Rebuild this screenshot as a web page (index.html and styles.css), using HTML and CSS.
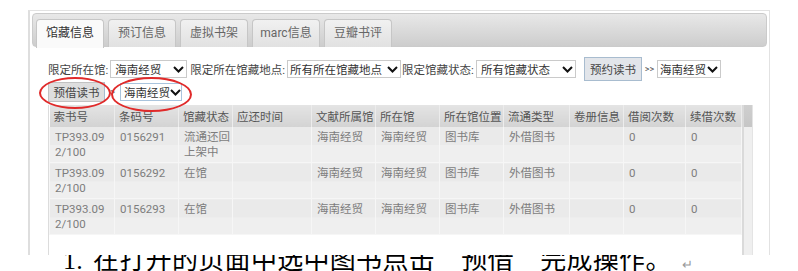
FILE: index.html
```html
<!DOCTYPE html>
<html lang="zh-CN">

<head>
    <meta charset="UTF-8">
    <title>馆藏信息</title>

    <link rel="stylesheet" href="styles.css">
</head>

<body>

    <div class="shot">
        <div class="frame">

            <!-- tabs -->
            <div class="tabbar">
                <div class="tab active">馆藏信息</div>
                <div class="tab">预订信息</div>
                <div class="tab">虚拟书架</div>
                <div class="tab">marc信息</div>
                <div class="tab">豆瓣书评</div>
            </div>

            <div class="panel">
                <div class="filter-row">
                    <span class="label">限定所在馆:</span>
                    <span class="sel sel-lib">海南经贸<svg class="chev" viewBox="0 0 11 7"><path d="M1 1l4.5 4.5L10 1"/></svg></span>
                    <span class="label label-next">限定所在馆藏地点:</span>
                    <span class="sel sel-loc">所有所在馆藏地点<svg class="chev" viewBox="0 0 11 7"><path d="M1 1l4.5 4.5L10 1"/></svg></span>
                    <span class="label">限定馆藏状态:</span>
                    <span class="sel sel-state">所有馆藏状态<svg class="chev" viewBox="0 0 11 7"><path d="M1 1l4.5 4.5L10 1"/></svg></span>
                    <span class="btn btn-reserve">预约读书</span>
                    <span class="arrow">&gt;&gt;</span>
                    <span class="sel sel-sm">海南经贸<svg class="chev" viewBox="0 0 11 7"><path d="M1 1l4.5 4.5L10 1"/></svg></span>
                </div>

                <div class="filter-row row-borrow">
                    <span class="marked">
                        <span class="btn btn-borrow">预借读书</span>
                        <span class="ring ring-btn"></span>
                    </span>
                    <span class="arrow arrow-one">&gt;</span>
                    <span class="marked">
                        <span class="sel sel-focus">海南经贸<svg class="chev" viewBox="0 0 11 7"><path d="M1 1l4.5 4.5L10 1"/></svg></span>
                        <span class="ring ring-sel"></span>
                    </span>
                </div>

                <div class="grid">
                    <table class="holdings">
                        <colgroup>
                            <col style="width:65px">
                            <col style="width:64px">
                            <col style="width:54px">
                            <col style="width:79px">
                            <col style="width:64px">
                            <col style="width:64px">
                            <col style="width:64px">
                            <col style="width:66px">
                            <col style="width:54px">
                            <col style="width:62px">
                            <col style="width:56px">
                        </colgroup>
                        <thead>
                            <tr>
                                <th>索书号</th>
                                <th>条码号</th>
                                <th>馆藏状态</th>
                                <th>应还时间</th>
                                <th>文献所属馆</th>
                                <th>所在馆</th>
                                <th>所在馆位置</th>
                                <th>流通类型</th>
                                <th>卷册信息</th>
                                <th>借阅次数</th>
                                <th>续借次数</th>
                            </tr>
                        </thead>
                        <tbody>
                            <tr>
                                <td>TP393.09<br>2/100</td>
                                <td>0156291</td>
                                <td>流通还回<br>上架中</td>
                                <td></td>
                                <td>海南经贸</td>
                                <td>海南经贸</td>
                                <td>图书库</td>
                                <td>外借图书</td>
                                <td></td>
                                <td>0</td>
                                <td>0</td>
                            </tr>
                            <tr>
                                <td>TP393.09<br>2/100</td>
                                <td>0156292</td>
                                <td>在馆</td>
                                <td></td>
                                <td>海南经贸</td>
                                <td>海南经贸</td>
                                <td>图书库</td>
                                <td>外借图书</td>
                                <td></td>
                                <td>0</td>
                                <td>0</td>
                            </tr>
                            <tr>
                                <td>TP393.09<br>2/100</td>
                                <td>0156293</td>
                                <td>在馆</td>
                                <td></td>
                                <td>海南经贸</td>
                                <td>海南经贸</td>
                                <td>图书库</td>
                                <td>外借图书</td>
                                <td></td>
                                <td>0</td>
                                <td>0</td>
                            </tr>
                        </tbody>
                    </table>
                    <div class="vscroll"></div>
                </div>
            </div>
        </div>
    </div>

    <!-- document line under the picture, top half hidden by the picture -->
    <div class="caption">
        <div class="caption-text"><span class="num">1.</span>在打开的页面中选中图书点击“预借”完成操作。<span class="para">↵</span></div>
    </div>

</body>

</html>
```

FILE: styles.css
```css
body {
    margin: 0;
    background: #fff;
    font-family: Roboto, "Noto Sans CJK SC", sans-serif;
}

/* picture area */
.shot {
    height: 255px;
    overflow: hidden;
    padding: 10px 0 0 28px;
    box-sizing: border-box;
    background: #fff;
}

.frame {
    width: 742px;
    height: 300px;
    box-sizing: border-box;
    border: 1px solid #e2e2e2;
    border-left: 2px solid #dedede;
    padding: 2px 2px 0 2px;
    background: #fff;
}

/* tabs */
.tabbar {
    display: flex;
    height: 34px;
    box-sizing: border-box;
    padding: 5px 0 0 3px;
    border: 1px solid #cbcbcb;
    border-radius: 4px;
    background: linear-gradient(#e8e8e8, #cdcdcd);
}

.tab {
    width: 68px;
    height: 28px;
    box-sizing: border-box;
    margin-right: 4px;
    border: 1px solid #c6c6c6;
    border-bottom: none;
    border-radius: 4px 4px 0 0;
    background: linear-gradient(#f1f1f1, #e1e1e1);
    color: #666;
    font-size: 12px;
    line-height: 27px;
    text-align: center;
}

.tab.active {
    background: #fafafa;
    color: #333;
    height: 29px;
}

/* filter rows */
.panel {
    padding: 10px 0 0 16px;
}

.filter-row {
    display: flex;
    align-items: center;
    height: 24px;
    font-size: 11.5px;
    color: #444;
    white-space: nowrap;
}

.row-borrow {
    height: 22px;
}

.label {
    margin-right: 2px;
}

.label-next {
    margin-left: 3px;
}

.sel {
    display: inline-flex;
    align-items: center;
    height: 18px;
    box-sizing: border-box;
    padding: 0 2px 0 4px;
    border: 1px solid #cacaca;
    background: #fff;
    color: #333;
    font-size: 11.5px;
}

.chev {
    flex-shrink: 0;
    width: 11px;
    height: 7px;
    margin-left: auto;
    fill: none;
    stroke: #111;
    stroke-width: 2;
}

.sel-lib {
    width: 77px;
}

.sel-loc {
    width: 114px;
    padding-left: 2px;
    margin-right: 1px;
}

.sel-state {
    width: 100px;
}

.sel-sm {
    width: 64px;
    padding-left: 2px;
}

.sel-focus {
    width: 62px;
    padding-left: 3px;
    border-color: #a9c4dd;
}

.btn {
    display: inline-flex;
    align-items: center;
    justify-content: center;
    box-sizing: border-box;
    color: #444;
    font-size: 11.5px;
}

.btn-reserve {
    width: 58px;
    height: 24px;
    margin-left: 8px;
    background: #e2e5ea;
    border: 1px solid #a8bccf;
}

.btn-borrow {
    width: 57px;
    height: 20px;
    background: #dedede;
    border: 1px solid #c2c2c2;
    border-right-color: #a8bccf;
}

.arrow {
    width: 15px;
    font-size: 9px;
    color: #555;
    text-align: center;
}

/* red marks drawn over the controls */
.marked {
    position: relative;
    display: inline-flex;
}

.ring {
    position: absolute;
    border: 2px solid #e02a2a;
    border-radius: 50%;
}

.ring-btn {
    top: -5px;
    bottom: -7px;
    left: -9px;
    right: -6px;
}

.ring-sel {
    top: -6px;
    bottom: -11px;
    left: -9px;
    right: -10px;
}

/* table */
.grid {
    display: flex;
    width: 704px;
    height: 160px;
    margin-top: 2px;
    border-left: 1px solid #dcdcdc;
}

.holdings {
    width: 692px;
    table-layout: fixed;
    border-collapse: collapse;
    align-self: flex-start;
    font-size: 11.5px;
}

.holdings th {
    height: 22px;
    padding: 0 4px;
    box-sizing: border-box;
    background: linear-gradient(#e4e4e4, #d3d3d3);
    border-right: 1px solid #ececec;
    color: #555;
    font-weight: normal;
    text-align: left;
    white-space: nowrap;
}

.holdings td {
    padding: 3px 5px 2px;
    line-height: 15px;
    vertical-align: top;
    background: linear-gradient(#eaeaea 52%, #efefef 52%);
    border: 1px solid #f6f6f6;
    border-top: none;
    color: #7d7d7d;
    white-space: nowrap;
}

.vscroll {
    width: 12px;
    background: linear-gradient(#cfcfcf, #c6c6c6) top / 100% 22px no-repeat, #efefef;
    border-left: 2px solid #dadada;
    border-right: 1px solid #e4e4e4;
}

/* document text below */
.caption {
    height: 16px;
    overflow: hidden;
    background: #fff;
}

.caption-text {
    margin-top: -10px;
    padding-left: 63px;
    font-family: "Noto Sans CJK SC", sans-serif;
    font-size: 26px;
    line-height: 26px;
    letter-spacing: 0.3px;
    color: #000;
    white-space: nowrap;
}

.num {
    font-family: "Liberation Serif", serif;
    margin-right: 10px;
}

.para {
    font-size: 13px;
    color: #999;
    margin-left: 10px;
}
```
